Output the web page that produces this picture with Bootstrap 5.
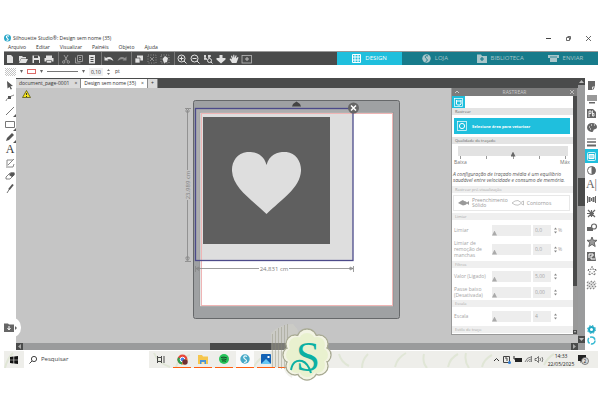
<!DOCTYPE html>
<html lang="pt-BR">
<head>
<meta charset="utf-8">
<meta name="viewport" content="width=device-width, initial-scale=1">
<title>Silhouette Studio</title>
<link href="https://cdn.jsdelivr.net/npm/bootstrap@5.3.0/dist/css/bootstrap.min.css" rel="stylesheet">
<style>
:root{--cy:#1fbfdd;--dk:#4a4b4b;--cv:#c5c5c5}
body{font:5px/7px "Open Sans","Noto Sans",sans-serif;color:#333;background:#fff;overflow:hidden}
button,input{font:inherit;color:inherit;border:0;background:none;padding:0;margin:0;min-width:0;border-radius:0}
button{display:flex;align-items:center;justify-content:center}
a{color:inherit;text-decoration:none}
svg{display:block;flex:none;overflow:visible}
.app{padding:33px 3px 0 4px}
.titlebar{height:10px}
.brand{gap:2px}
.winbtn{width:20px}
.menus{height:8px;gap:10px;padding-left:4px}
.tools{background:var(--dk);border-top:1px solid #999;height:14px;color:#e2e2e2}
.tgroup{padding-left:1px}
.tgroup + .tgroup{border-left:1px solid #777;margin-left:1px;padding-left:2px}
.tgroup button{width:13px;justify-content:flex-start}
.areas{width:261px;font-size:6px;background:#177b8b;color:#a9c6ca}
.areas a{flex:1 1 0;gap:4px}
.areas a.on{background:var(--cy);color:#fff}
.opts{height:13px;padding-left:1px;gap:4px}
.opts .num{width:14px;background:#f1f1f1;text-align:center;height:8px}
.side{width:12px}
.side button{height:13px;width:12px}
.glyph{font-family:"Liberation Serif",serif;font-size:12px}
.doctabs{background:var(--dk);height:10px}
.doctabs>div{background:#dadada;border-right:1px solid #888;gap:5px;padding:0 3px 0 3px;height:9px}
.doctabs>div.on{background:#fff}
.stage{background:var(--cv)}
.canvasarea{min-width:0}
.art{margin-left:164px}
.warn{left:6px;top:2px}
.bubble{left:-12px;bottom:5px;width:17px;height:21px;background:#fff;border-radius:0 10px 10px 0}
.pan{width:127px;background:#fff;border:1px solid #999;border-top:0;margin-bottom:8px;color:#777}
.pan .hd{height:8px;background:#7b7b7b;color:#c9c9c9;padding:0 3px}
.pbody{min-width:0;padding-bottom:1px}
.sec{background:#e4e4e4;color:#666;font-size:4px;line-height:7px;height:7px;padding-left:3px}
.dim{background:#efefef;color:#aaa}
.tile{width:13px;height:12px;background:var(--cy)}
.pick{background:var(--cy);color:#fff;height:16px;margin:3px 3px 3px 2px;font-weight:700;font-size:4px;gap:5px;padding-left:3px;justify-content:flex-start}
.tracebar{margin:2px 5px 0 6px}
input[type=range]{-webkit-appearance:none;appearance:none;display:block;background:#ededed;height:11px}
input[type=range]::-webkit-slider-thumb{-webkit-appearance:none;width:5px;height:5px;margin-top:6px;background:#aaa;clip-path:polygon(50% 0,100% 100%,0 100%)}
.tracebar input[type=range]{width:100%;height:10px;background:#e2e2e2}
.tracebar input::-webkit-slider-thumb{background:#666}
.ticks{height:3px;padding:0 2px}
.ticks i{width:1px;background:#999}
.ends{padding:0 3px 0 2px;line-height:6px}
.note{font-style:italic;color:#555;line-height:6px;margin:6px 0 3px 1px;white-space:nowrap}
.prev{border:1px solid #e8e8e8;height:16px;margin:2px 3px 2px 1px;color:#999;line-height:5px}
.prev button{gap:3px;text-align:left}
.prm{color:#a5a5a5;height:16px;padding-left:2px;line-height:6px}
.prm.first{margin:2px 0 3px}
.prm.tall{margin-bottom:4px}
.prm.last{margin:1px 0 2px}
.prm label{width:38px;white-space:nowrap}
.prm input[type=range]{width:39px}
.prm .num{width:18px;height:11px;background:#ededed;margin:0 2px;padding-left:2px}
.spin button{height:4px;width:5px}
.psb{width:4px;background:#999}
.psb div{background:var(--dk);height:190px}
.hs{height:7px;background:#9a9b9c}
.hs .th{background:var(--dk);width:90px;margin-left:187px}
.vs{width:7px;background:#9a9b9c;padding-bottom:7px}
.vs .th{background:var(--dk);height:28px;margin-top:93px}
.abtn{width:7px;height:7px;background:var(--dk)}
.rail{width:13px}
.rail .top{height:214px}
.rail button{height:14px;width:13px;color:#666}
.rail .low button{height:11px}
.rail button.on{background:var(--cy);color:#fff}
.task{height:17px;margin-top:1px;background:#eeeeea;color:#222}
.task .start{width:20px}
.task .view{width:24px}
.task .search{width:125px;background:#fff;gap:4px;padding-left:5px}
.search input{font-size:6px;width:90px;color:#333}
.search input::placeholder{color:#444;opacity:1}
.apps{gap:3px}
.apps button{width:18px;height:17px;border-bottom:1px solid #ff5f0f}
.apps .cur{background:#fbfbfb}
.leaves{left:0;top:0;width:100%;height:100%}
.tray{gap:3px;padding-right:8px}
.clock{line-height:8px;text-align:center;width:28px;white-space:nowrap}
.badgeart{left:270px;top:323px}
</style>
<script src="https://cdn.jsdelivr.net/npm/bootstrap@5.3.0/dist/js/bootstrap.bundle.min.js"></script>
</head>
<body>
<div class="app">
<header class="titlebar d-flex align-items-center justify-content-between">
 <div class="brand d-flex align-items-center">
  <svg width="7" height="8" viewBox="0 0 7 8"><circle cx="3.5" cy="4" r="3.5" fill="#2aa7c9"/><path d="M5 2.2C3 1.2 1.6 2.4 3 3.8S5 6 2.6 6.4" stroke="#fff" fill="none" stroke-width="1.1"/></svg>
  <span>Silhouette Studio®: Design sem nome (35)</span>
 </div>
 <div class="d-flex">
  <button class="winbtn" aria-label="Minimizar"><svg width="5" height="5"><path d="M0 2.5h5" stroke="#444"/></svg></button>
  <button class="winbtn" aria-label="Restaurar"><svg width="5" height="5"><path d="M.5 1.5h3v3h-3zM1.500 .5h3v3" stroke="#444" fill="none" stroke-width=".8"/></svg></button>
  <button class="winbtn" aria-label="Fechar"><svg width="5" height="5"><path d="M0 0l5 5M5 0L0 5" stroke="#444" stroke-width=".8"/></svg></button>
 </div>
</header>
<nav class="menus d-flex align-items-center"><a href="#">Arquivo</a><a href="#">Editar</a><a href="#">Visualizar</a><a href="#">Painéis</a><a href="#">Objeto</a><a href="#">Ajuda</a></nav>

<div class="tools d-flex align-items-stretch">
 <div class="tgroup d-flex">
  <button aria-label="Novo"><svg width="10" height="10"><path d="M2 1h4l2 2v6H2z" fill="currentColor"/></svg></button>
  <button aria-label="Abrir"><svg width="10" height="10"><path d="M1 8V2h3l1 1h3v1.500H3z" fill="currentColor"/><path d="M3 5h7L8 9H1z" fill="currentColor"/></svg></button>
  <button aria-label="Salvar"><svg width="10" height="10"><path d="M1.500 1.500h6l1.500 1.500v6H1.500z" fill="currentColor"/><path d="M3 1.500h4v2.500H3zM3 6h5v3H3z" fill="#4a4b4b"/></svg></button>
  <button aria-label="Imprimir"><svg width="10" height="10"><path d="M2 1.500h6V4H2zM.5 4h9v3.500H.5z" fill="currentColor"/><path d="M2.500 6.500h5V9h-5z" fill="currentColor" stroke="#4a4b4b" stroke-width=".6"/></svg></button>
 </div>
 <div class="tgroup d-flex">
  <button aria-label="Recortar"><svg width="10" height="10" stroke="#999" fill="none"><path d="M3 1l3.500 6M7 1L3.500 7"/><circle cx="2.700" cy="8" r="1.200"/><circle cx="7.300" cy="8" r="1.200"/></svg></button>
  <button aria-label="Copiar"><svg width="10" height="10" stroke="#999" fill="none"><path d="M3.500 1.500h5v6h-5zM1.500 3.500v5.500h5"/><path d="M5 3.500h2M5 5.500h2"/></svg></button>
  <button aria-label="Colar"><svg width="10" height="10"><path d="M2 1h6v8.500H2z" fill="currentColor"/><path d="M3.500 3.500h3M3.500 5.500h3M3.500 7.500h3" stroke="#4a4b4b"/></svg></button>
 </div>
 <div class="tgroup d-flex">
  <button aria-label="Desfazer"><svg width="10" height="10"><path d="M.5 6.500V2.500L2 4c3-2 6-1.500 7.500 3C7 5 5 5 3.300 5.500L4.500 6.500z" fill="currentColor"/></svg></button>
  <button aria-label="Refazer"><svg width="10" height="10"><path d="M9.500 6.500V2.500L8 4C5 2 2 2.500.5 7 3 5 5 5 6.700 5.500L5.500 6.500z" fill="#8d8d8d"/></svg></button>
 </div>
 <div class="tgroup d-flex">
  <button aria-label="Selecionar tudo"><svg width="10" height="10"><path d="M3 1.500h6v5H3z" fill="currentColor"/><path d="M1 4h5v5H1z" fill="currentColor" stroke="#4a4b4b" stroke-width=".7"/></svg></button>
  <button aria-label="Desmarcar"><svg width="10" height="10" stroke="#8d8d8d" fill="none"><rect x="1" y="1" width="8" height="8" stroke-dasharray="1 1.500"/><path d="M3 3l4 4M7 3L3 7"/></svg></button>
  <button aria-label="Selecionar por cor"><svg width="10" height="10"><rect x="1" y="1" width="8" height="8" stroke="#999" fill="none" stroke-dasharray="1 1.500"/><path d="M5 2l3 2-1 4-3 1-1.500-4z" fill="currentColor"/></svg></button>
 </div>
 <div class="tgroup d-flex">
  <button aria-label="Ampliar"><svg width="10" height="10" stroke="currentColor" fill="none"><circle cx="4.500" cy="4.500" r="3.500"/><path d="M7 7l2.500 2.500M2.500 4.500h4M4.500 2.500v4"/></svg></button>
  <button aria-label="Reduzir"><svg width="10" height="10" stroke="currentColor" fill="none"><circle cx="4.500" cy="4.500" r="3.500"/><path d="M7 7l2.500 2.500M2.500 4.500h4"/></svg></button>
  <button aria-label="Zoom da seleção"><svg width="10" height="10" stroke="currentColor" fill="none"><path d="M1 2h2M5 2h3M2 1v4M6 1v3M1 5h3" stroke-width="1.500"/><circle cx="6.500" cy="6.500" r="2"/><path d="M8 8l1.500 1.500"/></svg></button>
  <button aria-label="Arrastar zoom"><svg width="10" height="10"><path d="M3.500 1h3v3h3v1.500L5 9.500.5 5.500V4h3z" fill="currentColor"/></svg></button>
  <button aria-label="Mover"><svg width="10" height="10"><path d="M3 9L.5 5l1-.5L3 5.500 2 2l1-.4 1 2.400L4.300.7h1L5.500 4l1.200-2.800.9.400L7 4.500l1.700-1.500.8.600L7.500 9z" fill="currentColor"/></svg></button>
  <button aria-label="Ajustar à janela"><svg width="10" height="10" stroke="#bbb" fill="none"><rect x="0" y="1.500" width="9.500" height="7.500" stroke-width=".8"/><path d="M3 5h4M5 3v4"/></svg></button>
 </div>
 <nav class="areas d-flex ms-auto">
  <a href="#" class="on d-flex align-items-center justify-content-center"><svg width="9" height="9"><path d="M.5.5h8v8h-8zM.5 3h8M.5 6h8M3 .5v8M6 .5v8" stroke="#fff" fill="none"/></svg>DESIGN</a>
  <a href="#" class="d-flex align-items-center justify-content-center"><svg width="9" height="9"><circle cx="4.500" cy="4.500" r="4.200" fill="currentColor"/><path d="M6 2C3.500 1 2.500 3 4 4.300S6 6.500 3.500 8" stroke="#177b8b" fill="none"/></svg>LOJA</a>
  <a href="#" class="d-flex align-items-center justify-content-center"><svg width="10" height="9"><path d="M0 .5h4l1 1.500h5v7H0z" fill="currentColor"/><path d="M5 3v4M3 5h4" stroke="#177b8b" stroke-width="1.200"/></svg>BIBLIOTECA</a>
  <a href="#" class="d-flex align-items-center justify-content-center"><svg width="11" height="9"><path d="M0 1h11v3H9v4H2V4H0z" fill="currentColor"/><path d="M2 3h7" stroke="#177b8b" stroke-width=".8"/></svg>ENVIAR</a>
 </nav>
</div>

<div class="opts d-flex align-items-center">
 <svg width="11" height="8"><defs><pattern id="chk" width="2" height="2" patternUnits="userSpaceOnUse"><path d="M0 0h1v1H0zM1 1h1v1H1z" fill="#c4c4c4"/></pattern></defs><rect width="11" height="8" fill="url(#chk)"/></svg>
 <svg width="3" height="3"><path d="M0 0h3L1.500 3z" fill="#666"/></svg>
 <svg width="9" height="5"><rect x=".5" y=".5" width="8" height="4" fill="#fff" stroke="#dd6a68"/></svg>
 <svg width="3" height="3"><path d="M0 0h3L1.500 3z" fill="#666"/></svg>
 <svg width="31" height="3"><path d="M0 1.500h31" stroke="#777"/></svg>
 <svg width="3" height="3"><path d="M0 0h3L1.500 3z" fill="#666"/></svg>
 <input class="num" value="0,10" aria-label="Espessura da linha">
 <svg width="4" height="8"><path d="M0 3l1.500-2L3 3zM0 5h3L1.500 7z" fill="#777"/></svg>
 <span>pt</span>
</div>

<main class="d-flex align-items-stretch">
 <div class="side d-flex flex-column">
  <button aria-label="Selecionar"><svg width="10" height="10"><path d="M2 1l6 5-2.500.3L7 9l-1.300.6L4.500 7 2.500 8.500z" fill="#555"/></svg></button>
  <button aria-label="Editar pontos"><svg width="10" height="10"><path d="M1 8C2 5 4 4 9 2" stroke="#888" fill="none"/><path d="M3 3h3v3H3z" fill="#555"/></svg></button>
  <button aria-label="Linha"><svg width="10" height="10"><path d="M1 9L9 1" stroke="#777"/><path d="M11 8v3H8z" fill="#555"/></svg></button>
  <button aria-label="Retângulo"><svg width="10" height="10"><path d="M.5 2.500h9v6h-9z" stroke="#777" fill="none"/><path d="M11 9v3H8z" fill="#555"/></svg></button>
  <button aria-label="Lápis"><svg width="10" height="10"><path d="M1 9l1-3 5-5 2 2-5 5z" fill="#555"/><path d="M11 8v3H8z" fill="#555"/></svg></button>
  <button aria-label="Texto" class="glyph">A</button>
  <button aria-label="Esboço"><svg width="10" height="10" stroke="#888" fill="none"><path d="M2 2h6M2 2v6M1 9h7l1-3M3 7l6-6"/></svg></button>
  <button aria-label="Borracha"><svg width="10" height="10"><path d="M1 6l4-4h4v2L5 8H1z" fill="#fff" stroke="#666" stroke-width=".8"/><path d="M4 4l2-2.500h3.500V4L7 6z" fill="#555"/></svg></button>
  <button aria-label="Faca"><svg width="10" height="10"><path d="M2 9l2.500-4" stroke="#777"/><path d="M4 5.500l4-5" stroke="#555" stroke-width="2"/></svg></button>
 </div>

 <div class="d-flex flex-column flex-grow-1 canvasarea">
  <div class="doctabs d-flex align-items-end">
   <div class="d-flex align-items-center"><span>document_page-0001</span><button aria-label="Fechar aba">×</button></div>
   <div class="on d-flex align-items-center"><span>Design sem nome (35)</span><button aria-label="Fechar aba">×</button></div>
   <div class="d-flex align-items-center"><button aria-label="Nova aba">+</button></div>
  </div>
  <div class="stage d-flex flex-grow-1 position-relative">
   <svg class="warn position-absolute" width="9" height="8"><path d="M4.500.500L8.500 7.500h-8z" fill="#f7e61b" stroke="#55551a" stroke-width=".8"/><path d="M4.500 3v2M4.500 6v1" stroke="#333"/></svg>
   <div class="bubble position-absolute d-flex align-items-center justify-content-between pe-1">
    <button aria-label="Biblioteca"><svg width="10" height="9"><path d="M0 .5h4l1 1h5v7.500H0z" fill="#666"/><path d="M5 3v3M3.500 5L5 7l1.500-2" stroke="#fff" fill="none"/></svg></button>
    <svg width="2" height="4"><path d="M0 0l2 2-2 2z" fill="#666"/></svg>
   </div>
   <div class="flex-grow-1 canvasarea">
    <svg class="art" width="230" height="238" viewBox="180 88 230 238">
     <rect x="193.500" y="100.500" width="206" height="218" rx="2" fill="#9fa1a3" stroke="#66686a"/>
     <rect x="200" y="112.500" width="193" height="194" fill="#fff" stroke="#777" stroke-width=".4"/>
     <rect x="196" y="109" width="157" height="151" fill="#bbb" fill-opacity=".48"/>
     <rect x="201.500" y="113.500" width="191" height="192" fill="none" stroke="#efb5b5"/>
     <rect x="203" y="117" width="127" height="127" fill="#5f5f5f"/>
     <path d="M266.500 165C263.500 153 253 151.500 247 152C237 153 231.500 162 232 171C233 188 251 199 266.500 214C282 199 300 188 301 171C301.500 162 296 153 286.500 152C280 151.500 269.500 153 266.500 165Z" fill="#dedede"/>
     <rect x="195.500" y="108.500" width="157.500" height="152" fill="none" stroke="#4c4a8a" stroke-width="1.300"/>
     <path d="M292 106.500l1-2.500 3.500-2.500 3.500 2.500 1 2.500z" fill="#444"/>
     <circle cx="353.500" cy="108" r="5.500" fill="#666"/><path d="M351 105.500l5 5M356 105.500l-5 5" stroke="#fff" stroke-width="1.500"/>
     <g stroke="#858585" fill="none" stroke-width=".8"><path d="M187.500 110v60M187.500 200v60M185 108.500h6M185 261.500h6M186 110l1.500-1.500 1.500 1.500v2h-3zM186 259l1.500 2 1.500-2v-2h-3zM196 268.500h63M289 268.500h64M195.500 266v6M353.500 266v6M199 267l-3 1.500 3 2zM350 267v3l3-1.500z"/></g>
     <g fill="#808080" font-family="Open Sans,sans-serif" font-size="6"><text x="274" y="271" text-anchor="middle">24,831 cm</text><text transform="translate(190 185) rotate(-90)" text-anchor="middle">23,989 cm</text></g>
    </svg>
   </div>
   <section class="pan">
    <div class="hd d-flex align-items-center justify-content-between"><button aria-label="Recolher"><svg width="4" height="4"><path d="M0 3l2-2 2 2" stroke="currentColor" fill="none"/></svg></button><span>RASTREAR</span><button aria-label="Fechar painel"><svg width="4" height="4"><path d="M0 0l4 4M4 0L0 4" stroke="currentColor" stroke-width=".8"/></svg></button></div>
    <div class="d-flex">
     <div class="pbody flex-grow-1">
      <button class="tile" aria-label="Rastrear"><svg width="9" height="9" stroke="#fff" fill="none"><rect x=".5" y=".5" width="8" height="8" stroke-width=".7"/><path d="M2.500 2v4l1 1h2.500l1-1V2M2 3h5"/></svg></button>
      <div class="sec">Rastrear</div>
      <div class="d-flex"><button class="pick flex-grow-1"><svg width="10" height="10" stroke="#fff" fill="none"><rect x=".5" y=".5" width="9" height="9" stroke-width=".7"/><circle cx="5" cy="5" r="2.600"/></svg>Selecione área para vetorizar</button></div>
      <label class="sec d-block" for="q">Qualidade do traçado</label>
      <div class="tracebar"><input id="q" type="range" value="50"><div class="ticks d-flex justify-content-between"><i></i><i></i><i></i><i></i><i></i></div></div>
      <div class="ends d-flex justify-content-between"><span>Baixa</span><span>Máx</span></div>
      <p class="note">A configuração de traçado média é um equilíbrio<br>saudável entre velocidade e consumo de memória.</p>
      <div class="sec dim">Rastrear pré-visualização</div>
      <div class="prev d-flex align-items-center">
       <button class="ms-1"><svg width="11" height="6"><path d="M0 3l3-2 2-1 1 1c2 0 2 1 3 1.500L11 1v4L9 3.500C8 5 6 5 5 5.500L3 4.500z" fill="#999"/></svg><span>Preenchimento<br>Sólido</span></button>
       <button class="ms-1"><svg width="12" height="6"><path d="M0 3l3-2 3-.5 3 2 2.500-1.500v4L9 3.500l-3 1.700L3 4.800z" stroke="#aaa" stroke-width=".7" fill="none"/></svg><span>Contornos</span></button>
      </div>
      <div class="sec dim">Limiar</div>
      <div class="prm first d-flex align-items-center"><label for="r1">Limiar</label><input id="r1" type="range" value="0"><input class="num" value="0,0" aria-label="Valor do limiar"><div class="spin"><button aria-label="Mais"><svg width="3" height="3"><path d="M0 2.500l1.500-2 1.500 2z" fill="#888"/></svg></button><button aria-label="Menos"><svg width="3" height="3"><path d="M0 .5h3l-1.500 2z" fill="#888"/></svg></button></div><span>%</span></div>
      <div class="prm tall d-flex align-items-center"><label for="r2">Limiar de<br>remoção de<br>manchas</label><input id="r2" type="range" value="0"><input class="num" value="0,0" aria-label="Valor de manchas"><div class="spin"><button aria-label="Mais"><svg width="3" height="3"><path d="M0 2.500l1.500-2 1.500 2z" fill="#888"/></svg></button><button aria-label="Menos"><svg width="3" height="3"><path d="M0 .5h3l-1.500 2z" fill="#888"/></svg></button></div><span>%</span></div>
      <div class="sec dim">Filtros</div>
      <div class="prm d-flex align-items-center"><label for="r3">Valor (Ligado)</label><input id="r3" type="range" value="0"><input class="num" value="5,00" aria-label="Valor do filtro"><div class="spin"><button aria-label="Mais"><svg width="3" height="3"><path d="M0 2.500l1.500-2 1.500 2z" fill="#888"/></svg></button><button aria-label="Menos"><svg width="3" height="3"><path d="M0 .5h3l-1.500 2z" fill="#888"/></svg></button></div></div>
      <div class="prm d-flex align-items-center"><label for="r4">Passe baixo<br>(Desativada)</label><input id="r4" type="range" value="0"><input class="num" value="0,00" aria-label="Valor do passe baixo"><div class="spin"><button aria-label="Mais"><svg width="3" height="3"><path d="M0 2.500l1.500-2 1.500 2z" fill="#888"/></svg></button><button aria-label="Menos"><svg width="3" height="3"><path d="M0 .5h3l-1.500 2z" fill="#888"/></svg></button></div></div>
      <div class="sec dim">Escala</div>
      <div class="prm last d-flex align-items-center"><label for="r5">Escala</label><input id="r5" type="range" value="0"><input class="num" value="4" aria-label="Valor da escala"><div class="spin"><button aria-label="Mais"><svg width="3" height="3"><path d="M0 2.500l1.500-2 1.500 2z" fill="#888"/></svg></button><button aria-label="Menos"><svg width="3" height="3"><path d="M0 .5h3l-1.500 2z" fill="#888"/></svg></button></div></div>
      <div class="sec dim">Estilo de traço</div>
     </div>
     <div class="psb d-flex flex-column justify-content-between"><div></div><svg width="4" height="4"><rect width="4" height="4" fill="#4a4b4b"/><path d="M1 1h2L2 3z" fill="#ccc"/></svg></div>
    </div>
   </section>
  </div>
  <div class="hs d-flex"><svg class="abtn" viewBox="0 0 7 7"><path d="M5 1v5L2 3.500z" fill="#aaa"/></svg><div class="th"></div><svg class="abtn ms-auto" viewBox="0 0 7 7"><path d="M2 1v5l3-2.500z" fill="#aaa"/></svg></div>
 </div>

 <div class="vs d-flex flex-column"><svg class="abtn" viewBox="0 0 7 7"><path d="M1 5h5L3.500 2z" fill="#bbb"/></svg><div class="th"></div><svg class="abtn mt-auto" viewBox="0 0 7 7"><path d="M1 2h5L3.500 5z" fill="#bbb"/></svg></div>

 <div class="rail d-flex flex-column justify-content-between">
  <div class="top d-flex flex-column justify-content-between">
   <button aria-label="Página"><svg width="9" height="9"><path d="M1 0h7v6L6 9H1z" fill="currentColor"/><path d="M5.500 8.500V6H8" stroke="#fff" fill="none" stroke-width=".8"/></svg></button>
   <button aria-label="Tela"><svg width="10" height="9"><path d="M0 0h10v6H0z" fill="#999"/><path d="M2 7h6v1.500H2z" fill="currentColor"/></svg></button>
   <button aria-label="PixScan"><svg width="9" height="9"><path d="M0 0h6l3 3v6H0z" fill="currentColor"/><path d="M2 8V2h2v2.500H2M5.500 1.500V7H7V4.500H5.500" stroke="#fff" fill="none" stroke-width=".8"/></svg></button>
   <button aria-label="Cores"><svg width="10" height="9"><path d="M5 0c3 0 5 2 5 4S8 6 7 6.500 7 9 4.500 9C2 8.500 0 7 0 4.500S2 0 5 0z" fill="currentColor"/><path d="M2 4h1M4 2h1M7 2h1M3 6h1" stroke="#fff"/></svg></button>
   <button aria-label="Linhas"><svg width="9" height="9"><path d="M0 1h9" stroke="currentColor"/><path d="M0 4h9" stroke="currentColor" stroke-width="1.500"/><path d="M0 7.500h9" stroke="currentColor" stroke-width="2"/></svg></button>
   <button class="on" aria-label="Rastrear"><svg width="9" height="9" stroke="#fff" fill="none"><rect x=".5" y=".5" width="8" height="8" rx="1" stroke-width=".8"/><path d="M2 2.500h5v4H2z" fill="#a5e4ef"/></svg></button>
   <button aria-label="Contraste"><svg width="9" height="9"><circle cx="4.500" cy="4.500" r="4" fill="#fff" stroke="currentColor"/><path d="M4.500.5a4 4 0 010 8z" fill="currentColor"/></svg></button>
   <button aria-label="Estilo do texto" class="glyph">A|</button>
   <button aria-label="Alinhar"><svg width="9" height="9" stroke="currentColor"><path d="M.5 1v7M8.500 1v7M4.500 3v3" /><path d="M2.500 2v5M6.500 2v5" stroke-width="2"/></svg></button>
   <button aria-label="Replicar"><svg width="9" height="9" stroke="currentColor"><path d="M1 1l7 7M8 1L1 8M0 4.500h7M4.500 1v7" stroke-width="1.200"/></svg></button>
   <button aria-label="Modificar"><svg width="10" height="9"><path d="M0 4h6v4H0z" fill="currentColor"/><circle cx="7" cy="3.500" r="2.500" fill="#fff" stroke="currentColor" stroke-width="1.200"/></svg></button>
   <button aria-label="Deslocar"><svg width="10" height="10"><path d="M5 0l1.300 3.300H10L7.200 5.700 8.200 9.500 5 7.400 1.800 9.500l1-3.800L0 3.300h3.700z" fill="#999" stroke="#666"/></svg></button>
   <button aria-label="Sombra"><svg width="9" height="9"><path d="M0 0h8v4l1 5H0z" fill="currentColor"/><path d="M2 6V2h4v2H4v3h4" stroke="#fff" fill="none"/></svg></button>
   <button aria-label="Strass"><svg width="10" height="10"><path d="M5 .5l1.300 3H9.500L7.200 5.700 8.200 9 5 7.400 1.800 9l1-3.300L.5 3.500h3.200z" fill="none" stroke="#555" stroke-dasharray="1 1.300" stroke-width="1.200"/></svg></button>
   <button aria-label="Esboço"><svg width="9" height="8" stroke="#888"><path d="M0 2l2-2M0 5l5-5M0 8l8-8M3 8l6-6M6 8l3-3" stroke-width="1.300" stroke-dasharray="2 .6"/></svg></button>
  </div>
  <div class="low d-flex flex-column pb-1">
   <button aria-label="Preferências"><svg width="9" height="9" fill="none" stroke="#1fa9c4"><circle cx="4.500" cy="4.500" r="2.500" stroke-width="2"/><circle cx="4.500" cy="4.500" r="4" stroke-dasharray="1.600 1.540"/></svg></button>
   <button aria-label="Sincronizar"><svg width="9" height="9" fill="none" stroke="#35b9d2"><circle cx="4.500" cy="4.500" r="3.500" stroke-width="1.500" stroke-dasharray="6 1.300"/></svg></button>
  </div>
 </div>
</main>

<footer class="task d-flex align-items-stretch position-relative">
 <svg class="leaves position-absolute" viewBox="0 0 594 17" preserveAspectRatio="none"><g stroke="#e0e6d6" fill="none" stroke-width="2"><path d="M1 17Q3 8 9 2M150 2q4 10 16 14M172 16q2-9 14-12M250 16q4-9 14-12M335 3q2 8 10 12M358 17q0-8 6-14M391 16Q393 7 402 2M420 3q-2 8 3 14M444 16q2-9 10-13M462 2q-2 8 3 15M478 16q2-8 10-12M540 14q4-8 10-11"/></g></svg>
 <button class="start position-relative" aria-label="Iniciar"><svg width="8" height="8"><path d="M0 1l3.500-.5v3.200H0zM4.200.4L8 0v3.700H4.200zM0 4.300h3.500v3.200L0 7zM4.200 4.300H8V8l-3.800-.4z" fill="#111"/></svg></button>
 <label class="search d-flex align-items-center position-relative"><svg width="8" height="8" stroke="#444" fill="none"><circle cx="5" cy="3" r="2.600"/><path d="M3 5L.5 7.500"/></svg><input type="search" placeholder="Pesquisar" aria-label="Pesquisar"></label>
 <button class="view position-relative" aria-label="Visão de tarefas"><svg width="8" height="7" stroke="#333" fill="none"><path d="M.5 0v1.500h4V0M.5 7V5.500h4V7M.5 1.500v4M4.500 1.500v4M7 0v7" stroke-width=".9"/></svg></button>
 <div class="apps d-flex position-relative">
  <button aria-label="Chrome"><svg width="11" height="11"><circle cx="5.500" cy="5.500" r="5" fill="#e8473b"/><path d="M5.500 5.500L1 3.200A5 5 0 005 10.500z" fill="#2f9e4f"/><path d="M5.500 5.500h5A5 5 0 015 10.500z" fill="#f4c430"/><circle cx="5.500" cy="5.500" r="2.300" fill="#4584ed" stroke="#fff"/><circle cx="8" cy="8" r="2.700" fill="#6f2e31"/></svg></button>
  <button aria-label="Arquivos"><svg width="10" height="9"><path d="M0 0h4l1 1.500h5V9H0z" fill="#f5c64d"/><path d="M2 5h6v4H2z" fill="#4b94d6"/><path d="M3.500 7h3v2h-3z" fill="#ffe39a"/></svg></button>
  <button aria-label="Spotify"><svg width="10" height="10"><circle cx="5" cy="5" r="5" fill="#27c45a"/><path d="M2 3.500q3-1 6 .5M2.500 5.300q2.500-.8 5 .4M3 7q2-.5 4 .3" stroke="#174a28" fill="none"/></svg></button>
  <button class="cur" aria-label="Silhouette"><svg width="10" height="10"><circle cx="5" cy="5" r="4.700" fill="#48a9c7"/><path d="M7 2.500C4 1 2.500 3.500 5 5S7 8 4 8.500" stroke="#e9f7fa" fill="none" stroke-width="1.200"/></svg></button>
  <button aria-label="Fotos"><svg width="10" height="10"><rect width="10" height="10" rx="1" fill="#1261b4"/><path d="M0 10l5-5 5 5z" fill="#68c8f4"/><path d="M6.500 2h2v2h-2z" fill="#fff"/></svg></button>
  <button aria-label="Aplicativo"></button>
 </div>
 <div class="tray d-flex align-items-center ms-auto position-relative">
  <button aria-label="Mostrar ícones ocultos"><svg width="7" height="5"><path d="M1 4l2.500-2.500L6 4" stroke="#333" fill="none"/></svg></button>
  <svg width="8" height="8"><path d="M.5.5h6v6h-6zM2 2h2v3" stroke="#444" fill="none"/><circle cx="6.500" cy="6.500" r="1.500" fill="#2c7cd6"/></svg>
  <svg width="8" height="7"><path d="M1 2h7v4H1z" fill="#222"/><path d="M0 0v3h3" stroke="#222" fill="none"/></svg>
  <svg width="7" height="7"><path d="M0 6Q2 1 6 1M2 6q1-2.500 4-3M4 6q.5-1 2-1M6.500 0v6" stroke="#666" fill="none" stroke-width=".8"/></svg>
  <svg width="9" height="7"><path d="M0 2.500h1.500l2-2v6l-2-2H0zM5 2q1 1.500 0 3M7 1q1.500 2.500 0 5" stroke="#444" fill="none" stroke-width=".7"/></svg>
  <div class="clock">14:33<br>22/05/2025</div>
  <button aria-label="Notificações"><svg width="12" height="10"><path d="M0 0h8v6H4L2.500 8V6H0z" fill="#222"/><circle cx="7" cy="6" r="3.500" fill="#ddd" stroke="#555" stroke-width=".7"/><text x="7" y="8" font-size="5" text-anchor="middle" fill="#222">2</text></svg></button>
 </div>
</footer>
</div>

<svg class="badgeart position-absolute" width="64" height="62" viewBox="270 323 64 62">
 <path d="M271 333q9-9 22-9l5 6-6 48q-8-4-8-11h-13z" fill="#d8d8c8" fill-opacity=".35"/>
 <path d="M272.500 334v33M275.500 331v36M278.500 328v40M281.500 327v42M284.500 325v44M287.500 324v46" stroke="#8d8d78" stroke-opacity=".4"/>
 <g fill="#f3f4e4" stroke="#a9ab94" stroke-width="1.400"><circle cx="307" cy="339" r="10"/><circle cx="319" cy="344" r="9"/><circle cx="323" cy="355" r="8"/><circle cx="319" cy="366" r="9"/><circle cx="307" cy="370" r="10"/><circle cx="295" cy="366" r="9"/><circle cx="291" cy="355" r="8"/><circle cx="295" cy="344" r="9"/></g>
 <g fill="#f3f4e4"><circle cx="307" cy="355" r="19"/><circle cx="307" cy="339" r="9.300"/><circle cx="319" cy="344" r="8.300"/><circle cx="323" cy="355" r="7.300"/><circle cx="319" cy="366" r="8.300"/><circle cx="307" cy="370" r="9.300"/><circle cx="295" cy="366" r="8.300"/><circle cx="291" cy="355" r="7.300"/><circle cx="295" cy="344" r="8.300"/></g>
 <g fill="#e9f1cf"><circle cx="307" cy="355" r="18"/><circle cx="307" cy="341" r="8"/><circle cx="317" cy="345" r="8"/><circle cx="321" cy="355" r="7"/><circle cx="317" cy="365" r="8"/><circle cx="307" cy="369" r="8"/><circle cx="297" cy="365" r="8"/><circle cx="293" cy="355" r="7"/><circle cx="297" cy="345" r="8"/></g>
 <text x="308" y="371" font-family="Liberation Serif,serif" font-size="43" fill="#0bb0a3" text-anchor="middle">S</text>
 <path d="M291 370Q293 359 302 361Q308 363 311 373" fill="none" stroke="#0bb0a3" stroke-width="2"/>
</svg>
</body>
</html>
